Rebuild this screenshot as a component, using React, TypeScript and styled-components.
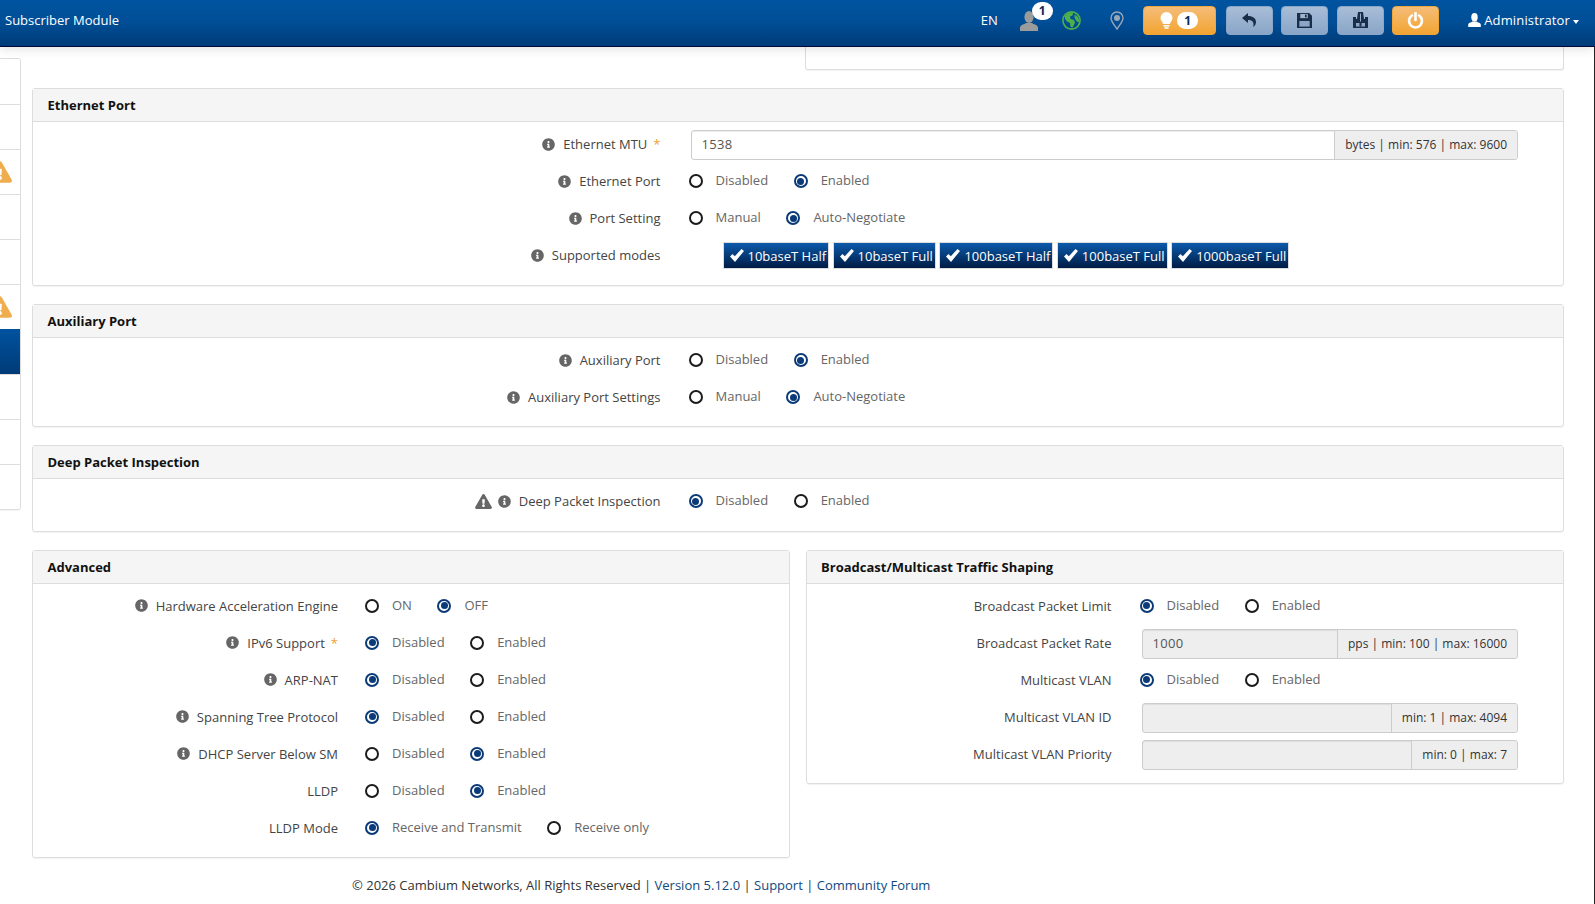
import * as React from 'react';
import styled, { createGlobalStyle } from 'styled-components';
import { FaInfoCircle, FaExclamationTriangle } from 'react-icons/fa';

const Global = createGlobalStyle`
  html, body {
    margin: 0;
    padding: 0;
    height: 904px;
    overflow: hidden;
    background: #fff;
    font-family: 'Open Sans', sans-serif;
    font-size: 13px;
    color: #333;
  }
  * { box-sizing: border-box; }
`;

const Header = styled.header`
  height: 47px;
  display: flex;
  align-items: center;
  padding: 0 16px 6px 5px;
  background: linear-gradient(#00549f, #004f98 45%, #003b78);
  border-bottom: 1px solid #00083a;
  color: #fff;
  position: relative;
  z-index: 2;
  box-shadow: 0 2px 10px rgba(0, 0, 0, 0.12);
`;
const Brand = styled.div`
  font-size: 13px;
  margin-right: auto;
`;
const Lang = styled.div`
  font-size: 13px;
  margin-right: 22px;
`;
const UserSlot = styled.div`
  position: relative;
  width: 18px;
  height: 20px;
  margin: 2px 24px 0 0;
`;
const Badge = styled.span`
  position: absolute;
  left: 12px;
  top: -9px;
  width: 21px;
  height: 18px;
  border-radius: 9px;
  background: #fff;
  color: #0a2a55;
  font-size: 12px;
  font-weight: 700;
  text-align: center;
  line-height: 18px;
`;
const IconSlot = styled.div<{ $gap: number }>`
  display: flex;
  margin-right: ${p => p.$gap}px;
`;
const Tools = styled.div`
  display: flex;
  gap: 8.5px;
  margin-right: 29px;
`;
const ToolButton = styled.div<{ $orange?: boolean; $wide?: boolean }>`
  width: ${p => (p.$wide ? 73 : 47)}px;
  height: 29px;
  margin-right: ${p => (p.$wide ? 1.5 : 0)}px;
  border-radius: 4px;
  display: flex;
  align-items: center;
  justify-content: center;
  gap: 4px;
  background: ${p =>
    p.$orange ? 'linear-gradient(#f5bd79, #f3a431)' : 'linear-gradient(#a8bed8, #89a5c7)'};
  border: 1px solid ${p => (p.$orange ? '#f0a43c' : '#8aa6c8')};
`;
const BulbCount = styled.span`
  width: 21px;
  height: 17px;
  border-radius: 9px;
  background: #fff;
  color: #0a2a55;
  font-size: 12px;
  font-weight: 700;
  text-align: center;
  line-height: 17px;
`;
const Admin = styled.div`
  display: flex;
  align-items: center;
  font-size: 13px;
  letter-spacing: 0.15px;
`;
const Caret = styled.span`
  width: 0;
  height: 0;
  margin: 3px 0 0 3px;
  border-left: 3.5px solid transparent;
  border-right: 3.5px solid transparent;
  border-top: 4px solid #fff;
`;

const Body = styled.div`
  display: flex;
  align-items: flex-start;
  height: 857px;
  border-right: 1px solid #222;
`;
const Side = styled.nav`
  width: 21px;
  margin: 11px 11px 0 0;
  flex-shrink: 0;
  border: 1px solid #ddd;
  border-left: 0;
  border-radius: 0 3px 3px 0;
  overflow: hidden;
  box-shadow: 0 1px 1px rgba(0, 0, 0, 0.05);
`;
const SideItem = styled.div<{ $active?: boolean }>`
  height: 45px;
  display: flex;
  align-items: center;
  justify-content: flex-end;
  padding-right: 8px;
  border-top: ${p => (p.$active ? '0' : '1px solid #ddd')};
  background: ${p => (p.$active ? 'linear-gradient(#00529f, #003b77)' : '#fff')};
  color: #f0ad4e;
  &:first-child { border-top: 0; }
  svg { flex-shrink: 0; }
`;

const Main = styled.main`
  width: 1532px;
`;
const PanelStub = styled.div`
  margin-left: 773px;
  height: 23px;
  border: 1px solid #ddd;
  border-top: 0;
  border-radius: 0 0 3px 3px;
  box-shadow: 0 1px 1px rgba(0, 0, 0, 0.05);
`;
const Panel = styled.section<{ $gapTop: number; $height?: number }>`
  margin-top: ${p => p.$gapTop}px;
  height: ${p => (p.$height ? `${p.$height}px` : 'auto')};
  border: 1px solid #ddd;
  border-radius: 3px;
  box-shadow: 0 1px 1px rgba(0, 0, 0, 0.05);
`;
const PanelHead = styled.h3`
  margin: 0;
  height: 33px;
  padding: 0 14.5px;
  display: flex;
  align-items: center;
  background: #f5f5f5;
  border-bottom: 1px solid #ddd;
  font-size: 13px;
  font-weight: 700;
  color: #111;
`;
const PanelBody = styled.div<{ $bottom?: number }>`
  padding: 8px 0 ${p => p.$bottom ?? 0}px;
  display: flex;
  flex-direction: column;
  gap: 7px;
`;
const Columns = styled.div`
  display: grid;
  grid-template-columns: 757.5px 758.5px;
  gap: 16px;
  align-items: start;
  margin-top: 17.5px;
`;
const Row = styled.div<{ $label: number; $gap: number }>`
  display: grid;
  grid-template-columns: ${p => p.$label}px 1fr;
  column-gap: ${p => p.$gap}px;
  height: 30px;
  align-items: center;
  padding-right: 45px;
`;
const Label = styled.label`
  display: flex;
  justify-content: flex-end;
  align-items: center;
  color: #444;
  margin-top: -2px;
`;
const Info = styled(FaInfoCircle)`
  width: 13px;
  height: 13px;
  color: #666;
  margin-right: 8px;
`;
const WarnMark = styled(FaExclamationTriangle)`
  width: 17px;
  height: 15px;
  color: #666;
  margin-right: 6px;
`;
const Required = styled.span`
  color: #f0a030;
  margin-left: 6px;
`;
const Radios = styled.div`
  display: flex;
  align-items: center;
  gap: 25.5px;
  margin: -2px 0 0 -2px;
`;
const Option = styled.div`
  display: flex;
  align-items: center;
  gap: 13px;
`;
const RadioMark = styled.span<{ $on?: boolean }>`
  width: 14px;
  height: 14px;
  border-radius: 50%;
  border: 2px solid ${p => (p.$on ? '#0b3a78' : '#1c1c1c')};
  display: flex;
  align-items: center;
  justify-content: center;
  &::after {
    content: '';
    width: 7px;
    height: 7px;
    border-radius: 50%;
    background: ${p => (p.$on ? '#0b3a78' : 'transparent')};
  }
`;
const OptionText = styled.span`
  color: #666;
  margin-top: -2px;
`;
const InputGroup = styled.div<{ $off?: boolean }>`
  display: flex;
  height: 30px;
  border: 1px solid #ccc;
  border-radius: 3px;
  background: ${p => (p.$off ? '#eee' : '#fff')};
  box-shadow: inset 0 1px 1px rgba(0, 0, 0, 0.075);
  overflow: hidden;
`;
const InputValue = styled.div`
  flex: 1;
  padding-left: 10px;
  line-height: 27px;
  color: #555;
  letter-spacing: 0.3px;
`;
const Addon = styled.div`
  padding: 0 10px;
  background: #eee;
  border-left: 1px solid #ccc;
  font-size: 12px;
  line-height: 27px;
  color: #333;
`;
const Modes = styled.div`
  display: flex;
  gap: 3.5px;
  margin: -1px 0 0 32px;
`;
const ModeButton = styled.div`
  height: 27px;
  display: flex;
  align-items: center;
  gap: 4px;
  padding: 0 2px 0 6px;
  background: linear-gradient(#0b5aab, #001c44);
  border: 1px solid #ddd;
  color: #fff;
  font-size: 13px;
`;
const Footer = styled.footer`
  margin: 18px 0 0 320px;
  color: #333;
  white-space: nowrap;
`;
const FootLink = styled.span`
  color: #0e4a80;
`;

const PersonIcon = ({ color, w, h }: { color: string; w: number; h: number }) => (
  <svg width={w} height={h} viewBox="0 0 18 20">
    <ellipse cx="9" cy="6" rx="4.600" ry="6" fill={color} />
    <path d="M0 20v-3.500c0-2.500 4.500-3.200 6-4.500h6c1.500 1.300 6 2 6 4.500V20z" fill={color} />
  </svg>
);
const GlobeIcon = () => (
  <svg width="19" height="19" viewBox="0 0 19 19">
    <circle cx="9.500" cy="9.500" r="8.600" fill="none" stroke="#4fb04a" strokeWidth="1.600" />
    <path d="M3 5l4-3.500 4 .5-.5 2.500-2.500 1 .5 2.500 3.500 1 1 3-2.500 4.500-2-.5-.5-4-3-1.500-2-2.500z" fill="#4fb04a" />
    <path d="M12.500 3.500l3.500 2.500 1.500 4-1 1.500-2.500-2-1.500-3z" fill="#4fb04a" />
  </svg>
);
const PinIcon = () => (
  <svg width="14" height="19" viewBox="0 0 14 19">
    <path d="M7 18C4 13.500 1 10.500 1 7a6 6 0 0 1 12 0c0 3.500-3 6.500-6 11z" fill="none" stroke="#9aa6b4" strokeWidth="1.400" />
    <circle cx="7" cy="7" r="3" fill="#9aa6b4" />
  </svg>
);
const BulbIcon = () => (
  <svg width="13" height="17" viewBox="0 0 13 17">
    <path d="M6.500 0a6 6 0 0 1 6 6c0 2.500-2 3.500-2.500 6H3C2.500 9.500.5 8.500.5 6a6 6 0 0 1 6-6z" fill="#fff" />
    <rect x="3.500" y="13" width="6" height="1.600" fill="#fff" />
    <rect x="4.500" y="15.200" width="4" height="1.600" fill="#fff" />
  </svg>
);
const UndoIcon = () => (
  <svg width="14" height="14" viewBox="0 0 14 14">
    <path d="M0 5l6-5v3c5 0 8 2.500 8 6 0 2-1 4-3 5 1-2.500.5-5-1-6-1-.8-2.500-1-4-1v3z" fill="#1a2e4a" />
  </svg>
);
const SaveIcon = () => (
  <svg width="15" height="15" viewBox="0 0 16 16">
    <path d="M0 0h13l3 3v13H0z" fill="#1a2e4a" />
    <rect x="3.500" y="1" width="8" height="4.500" fill="#a0b6d0" />
    <rect x="8.500" y="1.700" width="1.800" height="3" fill="#1a2e4a" />
    <rect x="2.500" y="8.500" width="11" height="6" fill="#8ba6c6" />
  </svg>
);
const FlashIcon = () => (
  <svg width="15" height="16" viewBox="0 0 15 16">
    <path d="M5 0h5l1 7h1V5h3v11H0V5h3v2h1z" fill="#1a2e4a" />
    <rect x="7" y="1.500" width="1" height="8" fill="#98b0cd" />
    <rect x="3" y="11" width="9" height="3.500" fill="#8ba6c6" />
    <rect x="6.500" y="11" width="2" height="3.500" fill="#1a2e4a" />
  </svg>
);
const PowerIcon = () => (
  <svg width="17" height="17" viewBox="0 0 17 17">
    <path d="M5 3.500a6.500 6.500 0 1 0 7 0" fill="none" stroke="#fff" strokeWidth="2.600" strokeLinecap="round" />
    <path d="M8.500 1v7" fill="none" stroke="#fff" strokeWidth="2.600" strokeLinecap="round" />
  </svg>
);
const CheckIcon = () => (
  <svg width="14" height="13" viewBox="0 0 14 13">
    <path d="M0 7.500l2.500-2.500 2.300 2.300L11.500 0 14 2 5 13z" fill="#fff" />
  </svg>
);

type Opt = [string, boolean];
const onOff = (enabled: boolean): Opt[] => [['Disabled', !enabled], ['Enabled', enabled]];

const RadioSet = ({ options }: { options: Opt[] }) => (
  <Radios>
    {options.map(([text, on]) => (
      <Option key={text}>
        <RadioMark $on={on} />
        <OptionText>{text}</OptionText>
      </Option>
    ))}
  </Radios>
);

const Field = ({ label, width, gap = 30, info = true, warn, required, children }: {
  label: string; width: number; gap?: number; info?: boolean; warn?: boolean; required?: boolean; children: React.ReactNode;
}) => (
  <Row $label={width} $gap={gap}>
    <Label>
      {warn && <WarnMark />}
      {info && <Info />}
      {label}
      {required && <Required>*</Required>}
    </Label>
    {children}
  </Row>
);

const modes = ['10baseT Half', '10baseT Full', '100baseT Half', '100baseT Full', '1000baseT Full'];
const sideRows = [false, false, true, false, false, true, false, false, false, false];

const advanced: { label: string; info?: boolean; required?: boolean; options: Opt[] }[] = [
  { label: 'Hardware Acceleration Engine', options: [['ON', false], ['OFF', true]] },
  { label: 'IPv6 Support', required: true, options: onOff(false) },
  { label: 'ARP-NAT', options: onOff(false) },
  { label: 'Spanning Tree Protocol', options: onOff(false) },
  { label: 'DHCP Server Below SM', options: onOff(true) },
  { label: 'LLDP', info: false, options: onOff(true) },
  { label: 'LLDP Mode', info: false, options: [['Receive and Transmit', true], ['Receive only', false]] },
];

const App = () => (
  <>
    <Global />
    <Header>
      <Brand>Subscriber Module</Brand>
      <Lang>EN</Lang>
      <UserSlot>
        <PersonIcon color="#9b9b9b" w={18} h={20} />
        <Badge>1</Badge>
      </UserSlot>
      <IconSlot $gap={29}><GlobeIcon /></IconSlot>
      <IconSlot $gap={19}><PinIcon /></IconSlot>
      <Tools>
        <ToolButton $orange $wide><BulbIcon /><BulbCount>1</BulbCount></ToolButton>
        <ToolButton><UndoIcon /></ToolButton>
        <ToolButton><SaveIcon /></ToolButton>
        <ToolButton><FlashIcon /></ToolButton>
        <ToolButton $orange><PowerIcon /></ToolButton>
      </Tools>
      <Admin>
        <IconSlot $gap={3}><PersonIcon color="#fff" w={13} h={14} /></IconSlot>
        Administrator
        <Caret />
      </Admin>
    </Header>
    <Body>
      <Side>
        {sideRows.map((warn, i) => (
          <SideItem key={i} $active={i === 6}>
            {warn && <FaExclamationTriangle size={24} />}
          </SideItem>
        ))}
      </Side>
      <Main>
        <PanelStub />
        <Panel $gapTop={18}>
          <PanelHead>Ethernet Port</PanelHead>
          <PanelBody $bottom={14}>
            <Field label="Ethernet MTU" width={627.5} required>
              <InputGroup>
                <InputValue>1538</InputValue>
                <Addon>bytes | min: 576 | max: 9600</Addon>
              </InputGroup>
            </Field>
            <Field label="Ethernet Port" width={627.5}><RadioSet options={onOff(true)} /></Field>
            <Field label="Port Setting" width={627.5}>
              <RadioSet options={[['Manual', false], ['Auto-Negotiate', true]]} />
            </Field>
            <Field label="Supported modes" width={627.5}>
              <Modes>
                {modes.map(m => (
                  <ModeButton key={m}><CheckIcon />{m}</ModeButton>
                ))}
              </Modes>
            </Field>
          </PanelBody>
        </Panel>
        <Panel $gapTop={18} $height={123}>
          <PanelHead>Auxiliary Port</PanelHead>
          <PanelBody>
            <Field label="Auxiliary Port" width={627.5}><RadioSet options={onOff(true)} /></Field>
            <Field label="Auxiliary Port Settings" width={627.5}>
              <RadioSet options={[['Manual', false], ['Auto-Negotiate', true]]} />
            </Field>
          </PanelBody>
        </Panel>
        <Panel $gapTop={18} $height={87}>
          <PanelHead>Deep Packet Inspection</PanelHead>
          <PanelBody>
            <Field label="Deep Packet Inspection" width={627.5} warn>
              <RadioSet options={onOff(false)} />
            </Field>
          </PanelBody>
        </Panel>
        <Columns>
          <Panel $gapTop={0} $height={308}>
            <PanelHead>Advanced</PanelHead>
            <PanelBody>
              {advanced.map(a => (
                <Field key={a.label} label={a.label} width={305} gap={29} info={a.info} required={a.required}>
                  <RadioSet options={a.options} />
                </Field>
              ))}
            </PanelBody>
          </Panel>
          <Panel $gapTop={0} $height={234}>
            <PanelHead>Broadcast/Multicast Traffic Shaping</PanelHead>
            <PanelBody>
              <Field label="Broadcast Packet Limit" width={305} info={false}><RadioSet options={onOff(false)} /></Field>
              <Field label="Broadcast Packet Rate" width={305} info={false}>
                <InputGroup $off>
                  <InputValue>1000</InputValue>
                  <Addon>pps | min: 100 | max: 16000</Addon>
                </InputGroup>
              </Field>
              <Field label="Multicast VLAN" width={305} info={false}><RadioSet options={onOff(false)} /></Field>
              <Field label="Multicast VLAN ID" width={305} info={false}>
                <InputGroup $off>
                  <InputValue />
                  <Addon>min: 1 | max: 4094</Addon>
                </InputGroup>
              </Field>
              <Field label="Multicast VLAN Priority" width={305} info={false}>
                <InputGroup $off>
                  <InputValue />
                  <Addon>min: 0 | max: 7</Addon>
                </InputGroup>
              </Field>
            </PanelBody>
          </Panel>
        </Columns>
        <Footer>
          © 2026 Cambium Networks, All Rights Reserved | <FootLink>Version 5.12.0</FootLink> | <FootLink>Support</FootLink> | <FootLink>Community Forum</FootLink>
        </Footer>
      </Main>
    </Body>
  </>
);

export default App;
